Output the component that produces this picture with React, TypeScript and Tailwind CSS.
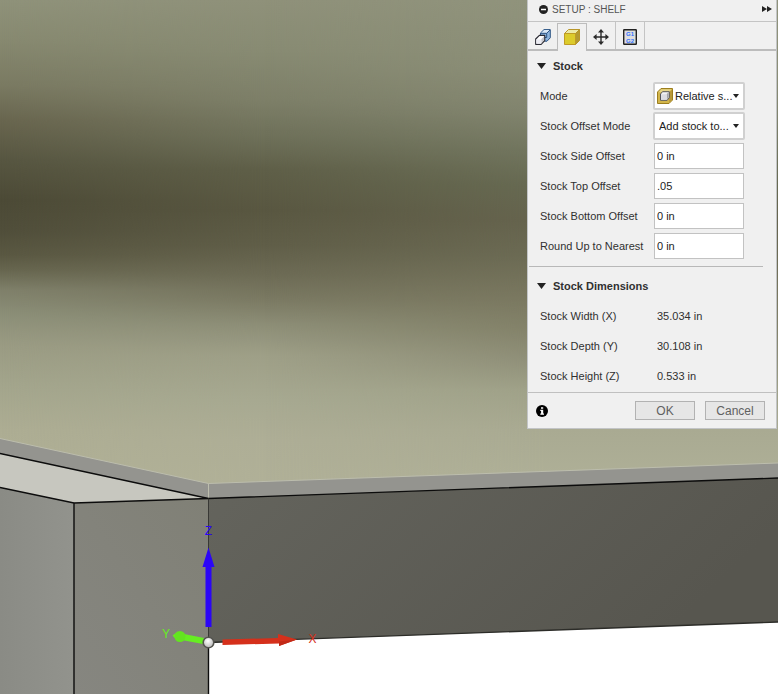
import { ReactNode, useState } from 'react';

type OffsetField = { id: string; label: string; value: string };

const offsetFields: OffsetField[] = [
  { id: 'side', label: 'Stock Side Offset', value: '0 in' },
  { id: 'top', label: 'Stock Top Offset', value: '.05' },
  { id: 'bottom', label: 'Stock Bottom Offset', value: '0 in' },
  { id: 'round', label: 'Round Up to Nearest', value: '0 in' },
];

const dimensions = [
  { label: 'Stock Width (X)', value: '35.034 in' },
  { label: 'Stock Depth (Y)', value: '30.108 in' },
  { label: 'Stock Height (Z)', value: '0.533 in' },
];

function SetupIcon() {
  return (
    <svg width="16" height="16" viewBox="0 0 16 16" strokeLinejoin="round">
      <path d="M5.5 4 9 .6h6.3v8.2l-3.3 3.4H9.5V7h-4z" fill="#8db4de" stroke="#2d5484" />
      <path d="M6.2 4 9.2 1.1h5.5l-3 2.9z" fill="#dbe9f7" />
      <path d="M5.5 4.3h6.2v4.2h-2M11.7 4.3 15 1" fill="none" stroke="#2d5484" />
      <path d="M.7 10 4.4 6.3h5.3v5.2l-3.6 3.8H.7z" fill="#fff" stroke="#2b2b33" strokeWidth="1.2" />
      <path d="M6.3 10.3 9.1 7.3v4l-2.8 3.2z" fill="#c4c4ca" />
      <path d="M1.3 10.4h5v4.3h-5z" fill="#ebebf2" />
    </svg>
  );
}

function StockIcon() {
  return (
    <svg width="16" height="16" viewBox="0 0 16 16" strokeLinejoin="round">
      <path d="M.5 4.5 4.5.5h11l-4 4z" fill="#ece9a6" stroke="#b8962a" />
      <path d="M11.5 4.5l4-4v11l-4 4z" fill="#b39a30" stroke="#b8962a" />
      <path d="M.5 4.5h11v11H.5z" fill="#dccb2c" stroke="#c09b25" />
    </svg>
  );
}

function MoveIcon() {
  return (
    <svg width="16" height="16" viewBox="0 0 16 16">
      <path d="M8 2v12M2 8h12" stroke="#2b2b2b" strokeWidth="1.4" />
      <path
        d="M8 0l3 3.6H5zM8 16l3-3.6H5zM0 8l3.6-3v6zM16 8l-3.6-3v6z"
        fill="#2b2b2b"
      />
    </svg>
  );
}

function PostIcon() {
  return (
    <svg width="14" height="16" viewBox="0 0 14 16">
      <rect x=".7" y=".7" width="12.6" height="14.6" rx=".5" fill="#dedede" stroke="#222" strokeWidth="1.4" />
      <g
        fill="#2f70ff"
        fontFamily="'Liberation Sans Narrow', 'Liberation Sans', Arial, sans-serif"
        fontWeight="700"
        fontSize="6"
        textAnchor="middle"
      >
        <text x="7" y="7">G1</text>
        <text x="7" y="14">G2</text>
      </g>
    </svg>
  );
}

function RelativeBoxIcon() {
  return (
    <svg width="16" height="16" viewBox="0 0 16 16" strokeLinejoin="round">
      <path d="M.5 4 4 .5h11.5V12L12 15.5H.5z" fill="#d2b54a" stroke="#9c7e1e" />
      <path d="M1.3 4.2 4.3 1.2h10.2l-2.6 3z" fill="#e5d486" />
      <path d="M12.2 4.4 15 1.6v10.2l-2.8 2.8z" fill="#b89838" />
      <path d="M3.5 6 5.5 3.7h6.8v6L10.2 12.3H3.5z" fill="#f2f2f4" stroke="#55555a" strokeWidth="1" />
      <path d="M9.7 6.1l2-1.9v5.2l-2 2.3z" fill="#a6a6aa" />
      <path d="M4.1 6.3h5.5v5.4H4.1z" fill="#dcdce2" />
    </svg>
  );
}

function Triangle({ className }: { className: string }) {
  return (
    <svg className={className} viewBox="0 0 10 6" preserveAspectRatio="none">
      <path d="M0 0h10L5 6z" fill="#222" />
    </svg>
  );
}

const tabs: { name: string; icon: ReactNode }[] = [
  { name: 'Setup', icon: <SetupIcon /> },
  { name: 'Stock', icon: <StockIcon /> },
  { name: 'Work offset', icon: <MoveIcon /> },
  { name: 'Post process', icon: <PostIcon /> },
];

function Viewport() {
  return (
    <svg
      className="absolute inset-0 h-full w-full"
      viewBox="0 0 778 694"
      preserveAspectRatio="xMinYMin slice"
      aria-hidden="true"
    >
      <defs>
        <linearGradient id="near" gradientUnits="userSpaceOnUse" x1="0" y1="0" x2="0" y2="500">
          <stop offset="0" stopColor="#8f927a" />
          <stop offset=".08" stopColor="#878970" />
          <stop offset=".17" stopColor="#7a7a62" />
          <stop offset=".24" stopColor="#69664f" />
          <stop offset=".32" stopColor="#575641" />
          <stop offset=".4" stopColor="#4c4a36" />
          <stop offset=".46" stopColor="#504e3a" />
          <stop offset=".51" stopColor="#5a5842" />
          <stop offset=".54" stopColor="#67664f" />
          <stop offset=".58" stopColor="#7f806a" />
          <stop offset=".63" stopColor="#8c8f78" />
          <stop offset=".69" stopColor="#9a9b83" />
          <stop offset=".77" stopColor="#a3a58c" />
          <stop offset=".86" stopColor="#adad93" />
          <stop offset="1" stopColor="#b2b297" />
        </linearGradient>
        <linearGradient id="middle" gradientUnits="userSpaceOnUse" x1="0" y1="0" x2="0" y2="500">
          <stop offset="0" stopColor="#8f917a" />
          <stop offset=".1" stopColor="#888b73" />
          <stop offset=".2" stopColor="#7d7f68" />
          <stop offset=".28" stopColor="#6d6f58" />
          <stop offset=".34" stopColor="#5f5f48" />
          <stop offset=".42" stopColor="#595741" />
          <stop offset=".49" stopColor="#605e48" />
          <stop offset=".55" stopColor="#6d6b55" />
          <stop offset=".6" stopColor="#7b7a63" />
          <stop offset=".65" stopColor="#8d8e77" />
          <stop offset=".71" stopColor="#9e9f87" />
          <stop offset=".8" stopColor="#a7a991" />
          <stop offset=".88" stopColor="#aeae96" />
          <stop offset="1" stopColor="#b1b198" />
        </linearGradient>
        <linearGradient id="far" gradientUnits="userSpaceOnUse" x1="0" y1="0" x2="0" y2="500">
          <stop offset="0" stopColor="#90937c" />
          <stop offset=".14" stopColor="#8b8e77" />
          <stop offset=".22" stopColor="#82856f" />
          <stop offset=".3" stopColor="#72765f" />
          <stop offset=".37" stopColor="#676a52" />
          <stop offset=".44" stopColor="#66644e" />
          <stop offset=".51" stopColor="#6c6b54" />
          <stop offset=".59" stopColor="#79775f" />
          <stop offset=".66" stopColor="#838269" />
          <stop offset=".72" stopColor="#8f8f78" />
          <stop offset=".78" stopColor="#9fa188" />
          <stop offset=".86" stopColor="#a9aa92" />
          <stop offset="1" stopColor="#b1b299" />
        </linearGradient>
        <linearGradient id="fadeMiddle">
          <stop offset="0" stopColor="#fff" stopOpacity="0" />
          <stop offset=".34" stopColor="#fff" />
        </linearGradient>
        <linearGradient id="fadeFar">
          <stop offset=".34" stopColor="#fff" stopOpacity="0" />
          <stop offset=".7" stopColor="#fff" />
        </linearGradient>
        <mask id="maskMiddle">
          <rect width="778" height="500" fill="url(#fadeMiddle)" />
        </mask>
        <mask id="maskFar">
          <rect width="778" height="500" fill="url(#fadeFar)" />
        </mask>
        <linearGradient id="frontFace" x1="0" y1="0" x2="1" y2=".3">
          <stop offset="0" stopColor="#64645d" />
          <stop offset="1" stopColor="#57564f" />
        </linearGradient>
        <linearGradient id="legFace" x1="0" y1="1" x2="1" y2="0">
          <stop offset="0" stopColor="#868680" />
          <stop offset="1" stopColor="#808076" />
        </linearGradient>
        <linearGradient id="sideFace" x1="0" y1="0" x2="1" y2="0">
          <stop offset="0" stopColor="#8a8b85" />
          <stop offset="1" stopColor="#92938d" />
        </linearGradient>
        <radialGradient id="origin" cx=".45" cy=".35">
          <stop offset="0" stopColor="#fff" />
          <stop offset="1" stopColor="#c9c9c9" />
        </radialGradient>
      </defs>

      <rect width="778" height="694" fill="#fff" />
      <rect width="778" height="500" fill="url(#near)" />
      <rect width="778" height="500" fill="url(#middle)" mask="url(#maskMiddle)" />
      <rect width="778" height="500" fill="url(#far)" mask="url(#maskFar)" />

      {/* stock edge band */}
      <path d="M0 438.5 208.5 483.5 778 463V478L208.5 498.5 0 454z" fill="#94948f" />
      <path d="M0 438.5 208.5 483.5 778 463M208.5 483.5V498" fill="none" stroke="#bcbdad" />

      {/* model faces */}
      <path d="M0 453.5 208.5 498.5 74 503 0 487.5z" fill="#c7c7bf" />
      <path d="M0 487.5 74 503V694H0z" fill="url(#sideFace)" />
      <path d="M74 503 208.5 498.5V694H74z" fill="url(#legFace)" />
      <path d="M208.5 498.5 778 478V622L208.5 642.5z" fill="url(#frontFace)" />
      <g fill="none" stroke="#0c0c0c" strokeWidth="1.4">
        <path d="M0 453.5 208.5 498.5 778 478M0 487.5 74 503 208.5 498.5M74 503V694" />
        <path d="M208.5 643V694" />
        <path d="M208.5 642.5 778 622" stroke="#2c2c28" />
        <path d="M208.5 498.5V643" stroke="#383835" strokeWidth="1" />
      </g>

      {/* axis triad */}
      <path d="M222.5 639.6 278 637.9V634L297 639.5 279 646V643.5L222.5 645z" fill="#d5301b" />
      <path d="M279 641.5 297 639.5 279 646z" fill="#c22a17" />
      <path d="M205.5 627V567H202.5L208.5 547.5 214.5 567H211.5V627z" fill="#2b05f7" />
      <path d="M203 644 179 639.5V633L204 638z" fill="#66ed22" />
      <path d="M172.5 635.5 178 631.5 178 641.5z" fill="#66ed22" />
      <circle cx="180" cy="636.5" r="5.5" fill="#63e420" />
      <circle cx="208.5" cy="642.5" r="5.3" fill="url(#origin)" stroke="#555550" strokeWidth="1.6" />
      <g fontFamily="'Liberation Sans', Arial, sans-serif" fontSize="12" textAnchor="middle">
        <text x="208.5" y="535" fill="#2b05f7">Z</text>
        <text x="312.5" y="643" fill="#d5301b">X</text>
        <text x="166" y="638" fill="#66ed22">Y</text>
      </g>
    </svg>
  );
}

function SectionTitle({ children }: { children: ReactNode }) {
  return (
    <button type="button" className="flex h-[30px] w-full items-center gap-[7px] pl-[9px] text-[11px] font-bold">
      <Triangle className="h-[6px] w-[9px]" />
      {children}
    </button>
  );
}

function SelectField({ id, label, option, icon }: { id: string; label: string; option: string; icon?: ReactNode }) {
  return (
    <div className="flex h-[30px] items-center pl-3">
      <label htmlFor={id} className="w-[113px]">{label}</label>
      <div className="relative w-[92px]">
        {icon && <span className="pointer-events-none absolute inset-y-0 left-1 flex items-center">{icon}</span>}
        <select
          id={id}
          className={`h-7 w-full appearance-none rounded-xs border-2 border-[#d0d0d0] bg-white text-[#222] ${
            icon ? 'pl-5' : 'pl-1'
          }`}
        >
          <option>{option}</option>
        </select>
        <Triangle className="pointer-events-none absolute top-3 right-[6px] h-1 w-[6px]" />
      </div>
    </div>
  );
}

export default function App() {
  const [activeTab, setActiveTab] = useState('Stock');
  const [values, setValues] = useState<Record<string, string>>(
    Object.fromEntries(offsetFields.map((f) => [f.id, f.value]))
  );

  return (
    <main className="relative min-h-screen overflow-hidden font-['Liberation_Sans',Arial,sans-serif] text-[11px] text-[#303030]">
      <Viewport />

      <section className="relative mr-px ml-auto w-[250px] border-x border-b border-[#c2c4c6] bg-[#f0f0f0]">
        <header className="flex h-[22px] items-center border-b border-[#c4c4c4] pr-[4px] pb-[3px] pl-[11px] text-[#555]">
          <svg width="9" height="9" viewBox="0 0 9 9" className="mr-1">
            <circle cx="4.5" cy="4.5" r="4.5" fill="#222" />
            <path d="M2 4.5h5" stroke="#fff" strokeWidth="1.5" />
          </svg>
          <h1 className="text-[10px]">SETUP : SHELF</h1>
          <button type="button" aria-label="Expand" className="ml-auto">
            <svg width="10" height="6" viewBox="0 0 10 6">
              <path d="M0 0l5 3-5 3zM5 0l5 3-5 3z" fill="#222" />
            </svg>
          </button>
        </header>

        <nav className="flex h-[29px] items-end border-b-2 border-[#bcbcbc]">
          {tabs.map((tab) => {
            const active = tab.name === activeTab;
            return (
              <button
                key={tab.name}
                type="button"
                aria-label={tab.name}
                onClick={() => setActiveTab(tab.name)}
                className={`flex items-center justify-center ${
                  active
                    ? '-mb-[2px] h-[28px] w-[30px] border-x border-t border-[#bcbcbc] bg-[#f0f0f0] pb-[2px]'
                    : 'h-[27px] w-[29px] border-r border-[#c4c4c4] pt-[2px] first:border-r-0'
                }`}
              >
                {tab.icon}
              </button>
            );
          })}
        </nav>

        <form onSubmit={(e) => e.preventDefault()}>
          <SectionTitle>Stock</SectionTitle>
          <SelectField id="mode" label="Mode" option="Relative s..." icon={<RelativeBoxIcon />} />
          <SelectField id="offset-mode" label="Stock Offset Mode" option="Add stock to..." />
          {offsetFields.map((field) => (
            <div key={field.id} className="flex h-[30px] items-center pl-3">
              <label htmlFor={field.id} className="w-[114px]">{field.label}</label>
              <input
                id={field.id}
                type="text"
                value={values[field.id]}
                onChange={(e) => setValues({ ...values, [field.id]: e.target.value })}
                className="h-[26px] w-[90px] border border-[#c2c2c2] bg-white px-[2px] text-[#222]"
              />
            </div>
          ))}

          <hr className="mt-[5px] mr-[13px] mb-1 ml-px border-[#b8b8b8]" />

          <SectionTitle>Stock Dimensions</SectionTitle>
          <dl>
            {dimensions.map((d) => (
              <div key={d.label} className="flex h-[30px] items-center pl-3">
                <dt className="w-[117px]">{d.label}</dt>
                <dd>{d.value}</dd>
              </div>
            ))}
          </dl>

          <footer className="mt-px flex h-[36px] items-center gap-[10px] border-t border-[#c0c0c0] pr-[11px] pl-2">
            <button type="button" aria-label="Info" className="mr-auto">
              <svg width="12" height="12" viewBox="0 0 12 12">
                <circle cx="6" cy="6" r="6" fill="#000" />
                <path d="M5 2.2h2.2v1.6H5zM4.3 4.8h2.9v3.7h.8v1.2H4.3V8.5h.8V6h-.8z" fill="#fff" />
              </svg>
            </button>
            <button type="submit" className="h-[19px] w-[60px] border border-[#b2b2b2] bg-[#e6e6e6] text-[12px] leading-4 text-[#606060]">
              OK
            </button>
            <button type="button" className="h-[19px] w-[60px] border border-[#b2b2b2] bg-[#e6e6e6] text-[12px] leading-4 text-[#606060]">
              Cancel
            </button>
          </footer>
        </form>
      </section>
    </main>
  );
}
